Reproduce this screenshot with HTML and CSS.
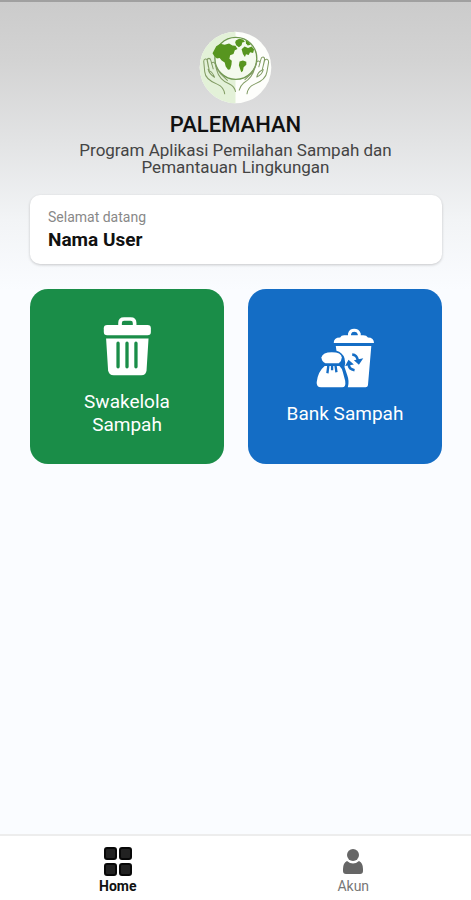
FILE: index.html
```html
<!DOCTYPE html>
<html lang="id">
<head>
    <meta charset="UTF-8">
    <meta name="viewport" content="width=device-width, initial-scale=1.0">
    <title>Palemahan</title>
    <link rel="stylesheet" href="styles.css">
</head>
<body>

<header class="header">
    <svg class="logo" viewBox="30 34 216 216" aria-hidden="true">
        <circle cx="138" cy="142" r="106" fill="#fdfefb"/>
        <path d="M138 36a106 106 0 0 0 0 212z" fill="#e3f1d8"/>
        <circle cx="139" cy="115" r="62" fill="#f4faee" stroke="#6f9850" stroke-width="4"/>
        <g fill="#57951f">
            <path d="M81 79l12-7 13 3 13-4 10 6 9 1 6 9-8 4-4 11-10 4-2 10 7 6-1 12-4 13-6 2-7-10-3-12-9-6-6-7-8 1-8-7-5-8z"/>
            <path d="M139 62l10-5 11 2 6 7-8 2-2 8-8 6-8-6-3-8z"/>
            <path d="M168 61l8 5 7 9-9 2-5-7z"/>
            <path d="M156 88l9-8 10 4 11-4 7 9-3 10-9-2-4 8-8-2-3 8-6-9z"/>
            <path d="M150 124l10-3 10 4 0 9-8 7-2 11-5 4-4-12-3-9z"/>
        </g>
        <g fill="none" stroke="#829c64" stroke-width="3" stroke-linecap="round" stroke-linejoin="round">
            <path d="M106 220c-2-13-9-23-21-28-21-8-37-20-38-37l-3-31c0-9 9-10 11-2l5 27m-2-8l-4-20c1-8 9-8 11 0l7 25m-5-15c3-7 9-5 11 1l4 16c5 20 19 35 38 43 10 5 16 12 18 22M57 147c2 11 8 17 19 24-3-8-8-17-15-19m20-11l13 20 20 19"/>
            <path d="M172 220c2-13 9-23 21-28 21-8 36-20 38-37l5-29c0-9-9-12-12-4l-7 27m3-12l4-19c0-9-9-9-11 0l-6 22m4-13c-3-7-10-5-11 1l-5 16c-5 20-18 35-32 43-8 7-12 14-14 22M220 148c-2 10-8 17-19 22 2-9 7-16 14-19m-19-10l-12 20-18 17"/>
        </g>
    </svg>
    <h1>PALEMAHAN</h1>
    <p>Program Aplikasi Pemilahan Sampah dan Pemantauan Lingkungan</p>
</header>

<main class="content">
    <section class="welcome">
        <span class="welcome-label">Selamat datang</span>
        <strong class="welcome-name">Nama User</strong>
    </section>

    <div class="menu">
        <button type="button" class="menu-item green">
            <svg class="icon-bin" viewBox="40 34 147 178" aria-hidden="true">
                <path d="M91 61V52Q91 40 103 40h20Q135 40 135 52v9" fill="none" stroke="#fff" stroke-width="11"/>
                <rect x="42" y="58" width="142" height="31" rx="10" fill="#fff"/>
                <path d="M49 99H177L171 195Q170 210 155 210H72Q57 210 55 195Z" fill="#fff"/>
                <path d="M85 113v71M112 113v71M139 113v71" stroke="#1a8d48" stroke-width="10" stroke-linecap="round"/>
            </svg>
            <span>Swakelola Sampah</span>
        </button>
        <button type="button" class="menu-item blue">
            <svg class="icon-bank" viewBox="33 38 176 179" aria-hidden="true">
                <path d="M133 66V55Q136 45 147 45T162 55v11" fill="none" stroke="#fff" stroke-width="9"/>
                <path d="M86 83Q85 66 105 66Q108 60 117 60H174Q184 60 188 66Q206 66 206 83Z" fill="#fff"/>
                <path d="M92 92H198L188 209Q187 215 181 215H128Q133 196 126 178L118 154Q122 141 118 128Q112 111 94 106Z" fill="#fff"/>
                <path d="M49 126Q53 110 80 110Q109 110 110 126Q110 136 101 143H61Q50 138 49 126Z" fill="#fff"/>
                <path d="M59 151H103Q110 157 113 169L120 195Q123 215 111 215H48Q34 215 35 200Q38 168 59 151Z" fill="#fff"/>
                <g fill="none" stroke="#146dc5" stroke-width="7">
                    <path d="M70 149l-3 24M81 149v15M91 149l3 21"/>
                    <path d="M141 117q14 1 17 18M148 164q-17-3-17-16" stroke-width="8"/>
                </g>
                <path d="M146 134l28-6-13 20zM120 151l10-18 16 14z" fill="#146dc5"/>
            </svg>
            <span>Bank Sampah</span>
        </button>
    </div>
</main>

<nav class="bottom-nav">
    <a href="#home" class="nav-link active">
        <svg viewBox="0 0 30 30" aria-hidden="true">
            <g fill="#222" stroke="#080808" stroke-width="2">
                <rect x="2" y="2" width="11" height="11" rx="2"/>
                <rect x="17" y="2" width="11" height="11" rx="2"/>
                <rect x="2" y="18" width="11" height="11" rx="2"/>
                <rect x="17" y="18" width="11" height="11" rx="2"/>
            </g>
        </svg>
        Home
    </a>
    <a href="#akun" class="nav-link">
        <svg viewBox="0 0 30 30" aria-hidden="true">
            <g fill="#666">
                <circle cx="15" cy="9" r="6"/>
                <path d="M9 15Q15 20 21 15Q25 17 25 23V25Q25 28 22 28H8Q5 28 5 25V23Q5 17 9 15Z"/>
            </g>
        </svg>
        Akun
    </a>
</nav>

</body>
</html>
```
FILE: styles.css
```css
* {
    box-sizing: border-box;
}
body {
    font-family: Roboto, 'Liberation Sans', sans-serif;
    margin: 0;
    min-height: 100vh;
    display: flex;
    flex-direction: column;
    border-top: 2px solid #a0a0a0;
    background: #fafcff linear-gradient(#cbcbcb, #d3d3d3 60px, #e2e3e4 140px, #f2f4f6 220px, #fafcff 290px) no-repeat;
    color: #111;
}
.header {
    display: flex;
    flex-direction: column;
    align-items: center;
    padding: 29px 60px 0;
    text-align: center;
}
.logo {
    width: 73px;
    height: 73px;
}
h1 {
    margin: 8px 0 4px;
    font-size: 22px;
    font-weight: 500;
    line-height: 26px;
}
.header p {
    margin: 0;
    max-width: 340px;
    font-size: 17px;
    line-height: 17px;
    color: #444;
}
.content {
    flex: 1;
    padding: 19px 29px 30px 30px;
}
.welcome {
    display: flex;
    flex-direction: column;
    padding: 13px 18px 11px;
    background: #fff;
    border-radius: 10px;
    box-shadow: 0 1px 3px rgba(0, 0, 0, 0.2);
}
.welcome-label {
    font-size: 14px;
    line-height: 18px;
    color: #888;
}
.welcome-name {
    font-size: 19px;
    font-weight: 700;
    line-height: 27px;
}
.menu {
    display: grid;
    grid-template-columns: 1fr 1fr;
    gap: 24px;
    margin-top: 25px;
}
.menu-item {
    display: flex;
    flex-direction: column;
    align-items: center;
    justify-content: center;
    gap: 14px;
    min-height: 175px;
    padding: 16px 32px;
    border: none;
    border-radius: 18px;
    color: #fff;
    font-family: inherit;
    font-size: 19px;
    line-height: 23px;
    cursor: pointer;
}
.green {
    background: #1a8d48;
}
.blue {
    background: #146dc5;
}
.icon-bin {
    width: 49px;
    height: 59px;
}
.icon-bank {
    width: 59px;
    height: 60px;
}
.bottom-nav {
    display: grid;
    grid-template-columns: 1fr 1fr;
    background: #fff;
    border-top: 2px solid #ededed;
}
.nav-link {
    display: flex;
    flex-direction: column;
    align-items: center;
    padding: 10px 0 4px;
    font-size: 14px;
    line-height: 20px;
    color: #777;
    text-decoration: none;
}
.nav-link svg {
    width: 30px;
    height: 30px;
}
.nav-link.active {
    color: #111;
    font-weight: 700;
}
```
